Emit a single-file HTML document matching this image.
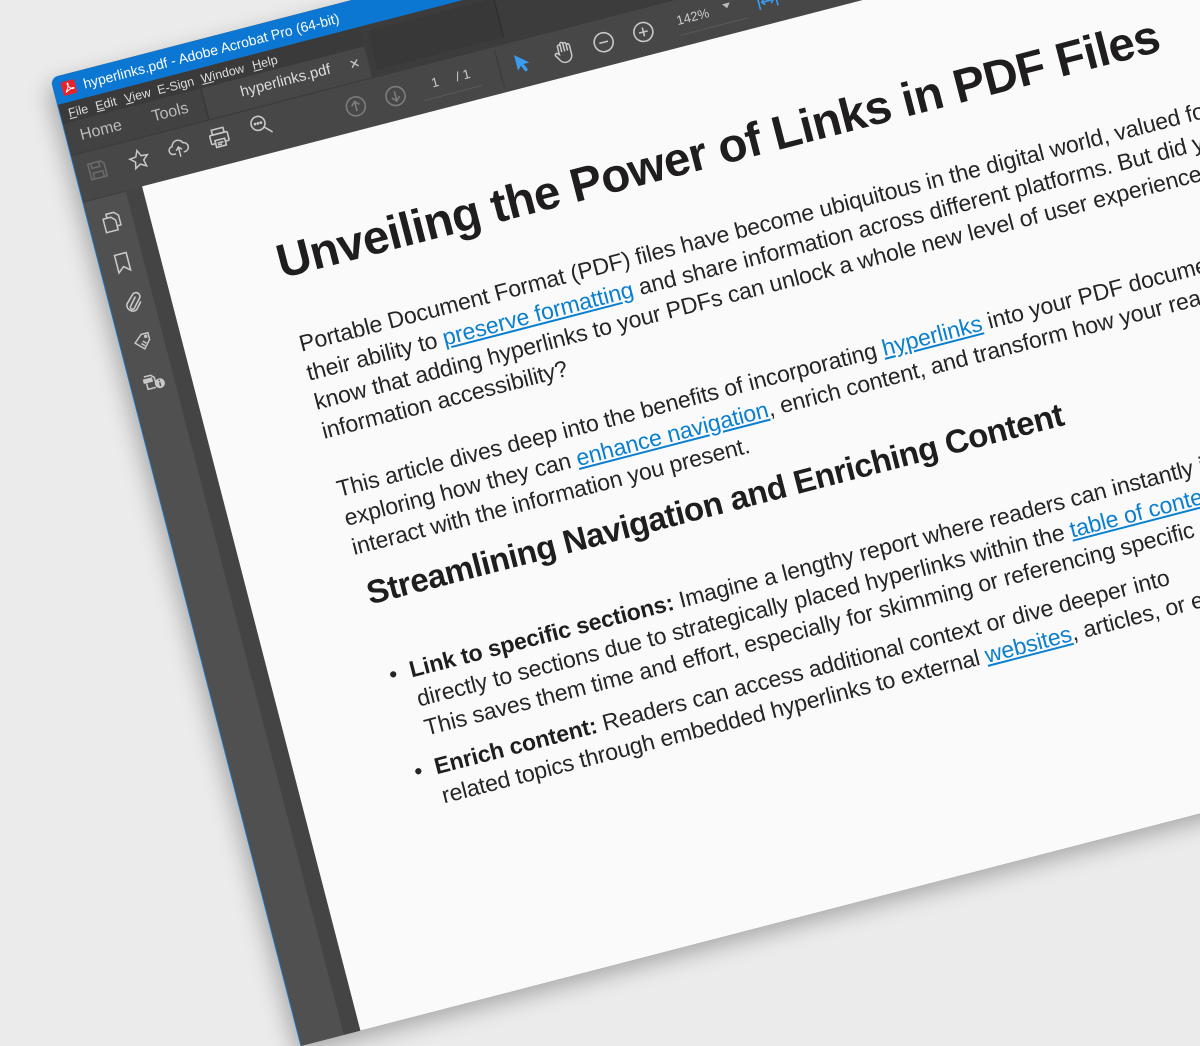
<!DOCTYPE html>
<html><head><meta charset="utf-8">
<style>
html,body{margin:0;padding:0;width:1200px;height:630px;overflow:hidden;background:#ebebeb;font-family:"Liberation Sans",sans-serif}
.win{position:absolute;left:50px;top:78px;width:1500px;height:1000px;transform-origin:0 0;transform:rotate(-14.5deg);background:#474747;border-top-left-radius:8px;border-left:1.5px solid #1a7fd6;box-shadow:-6px 8px 22px rgba(0,0,0,.28);overflow:hidden}
.abs{position:absolute}
.tb{left:0;top:0;width:1500px;height:28px;background:#0c77d2}
.ttl{left:30px;top:6px;color:#fff;font-size:14px;white-space:nowrap}
.menu{left:0;top:28px;width:1500px;height:20px;background:#3a3a3a}
.mi{top:32px;color:#ddd;font-size:12.5px;white-space:nowrap}
.hometools{left:0;top:48px;width:142px;height:32px;background:#424242;border-right:1px solid #333}
.doctab{left:143px;top:28px;width:167px;height:52px;background:#474747}
.dark{left:311px;top:28px;width:1200px;height:52px;background:#3c3c3c}
.darkbox{left:318px;top:34px;width:130px;height:40px;background:#383838;border-right:1px solid #2c2c2c}
.toolbar{left:0;top:80px;width:1500px;height:48px;background:#474747;border-top:1px solid #3a3a3a}
.side{left:0;top:128px;width:44px;height:900px;background:#505050;border-top:1px solid #3d3d3d}
.strip{left:44px;top:128px;width:17px;height:900px;background:#444}
.page{left:61px;top:128px;width:1500px;height:900px;background:#fafafa}
.pt{position:absolute;white-space:nowrap;color:#222}
.h1{font-size:47.5px;font-weight:bold;line-height:46px;letter-spacing:-0.6px;color:#1f1d1e}
.p{font-size:23px;line-height:30px;color:#252525;letter-spacing:-0.1px}
.h2{font-size:33px;font-weight:bold;line-height:34px;letter-spacing:-0.5px;color:#1f1d1e}
a{color:#0a7fd0;text-decoration:underline}
svg{position:absolute;overflow:visible}
</style></head><body>
<div class="win">
  <div class="abs tb"></div>
  <svg style="left:8px;top:7px" width="14" height="14" viewBox="0 0 14 14"><rect x="0" y="0" width="14" height="14" rx="2" fill="#e8242a"/><path d="M3 11 C6 7 7 4 7 3 C7 2 6 2 6 3 C6 6 9 9 11 9 C12 9 12 8 11 8 C8 8 5 10 3 11Z" fill="none" stroke="#fff" stroke-width="1"/></svg>
  <div class="abs ttl">hyperlinks.pdf - Adobe Acrobat Pro (64-bit)</div>
  <div class="abs menu"></div>
  <div class="abs dark"></div>
  <div class="abs darkbox"></div>
  <div class="abs mi" style="left:8px"><u>F</u>ile</div>
  <div class="abs mi" style="left:36px"><u>E</u>dit</div>
  <div class="abs mi" style="left:66px"><u>V</u>iew</div>
  <div class="abs mi" style="left:100px">E-Sign</div>
  <div class="abs mi" style="left:145px"><u>W</u>indow</div>
  <div class="abs mi" style="left:198px"><u>H</u>elp</div>
  <div class="abs hometools"></div>
  <div class="abs" style="left:14px;top:55px;color:#bbb;font-size:16px">Home</div>
  <div class="abs" style="left:88px;top:55px;color:#bbb;font-size:16px">Tools</div>
  <div class="abs doctab" style="top:48px;height:32px"></div>
  <div class="abs" style="left:180px;top:53px;color:#ddd;font-size:15px">hyperlinks.pdf</div>
  <div class="abs" style="left:292px;top:55px;color:#ccc;font-size:13px">✕</div>
  <div class="abs toolbar"></div>
  <svg style="left:12px;top:91px" width="20" height="20" viewBox="0 0 20 20" fill="none" stroke="#6a6a6a" stroke-width="1.6"><path d="M2 2h13l3 3v13H2z"/><path d="M5 2v5h8V2M5 18v-6h10v6"/></svg>
  <svg style="left:54px;top:90px" width="22" height="22" viewBox="0 0 22 22" fill="none" stroke="#c8c8c8" stroke-width="1.5"><path d="M11 2l2.7 6 6.3.6-4.8 4.2 1.4 6.4L11 16l-5.6 3.2 1.4-6.4L2 8.6 8.3 8z"/></svg>
  <svg style="left:95px;top:89px" width="22" height="22" viewBox="0 0 22 22" fill="none" stroke="#c8c8c8" stroke-width="1.5"><path d="M7 16H5a4 4 0 0 1 0-8 6 6 0 0 1 11.5-1A4.5 4.5 0 0 1 16 16h-1"/><path d="M11 20V10M8 13l3-3 3 3"/></svg>
  <svg style="left:137px;top:89px" width="22" height="22" viewBox="0 0 22 22" fill="none" stroke="#c8c8c8" stroke-width="1.6"><rect x="5" y="2" width="12" height="5"/><rect x="2" y="7" width="18" height="9" rx="1"/><rect x="6" y="13" width="10" height="7" fill="#474747"/><path d="M8 16h6M8 18h4"/></svg>
  <svg style="left:180px;top:87px" width="24" height="24" viewBox="0 0 24 24" fill="none" stroke="#c8c8c8" stroke-width="1.6"><circle cx="9" cy="9" r="7"/><path d="M14 14l7 7"/><circle cx="6" cy="9" r=".6" fill="#c8c8c8"/><circle cx="9" cy="9" r=".6" fill="#c8c8c8"/><circle cx="12" cy="9" r=".6" fill="#c8c8c8"/></svg>
  <svg style="left:277px;top:93px" width="22" height="22" viewBox="0 0 22 22" fill="none" stroke="#7d7d7d" stroke-width="1.6"><circle cx="11" cy="11" r="9.5"/><path d="M11 16V6M7 10l4-4 4 4"/></svg>
  <svg style="left:318px;top:93px" width="22" height="22" viewBox="0 0 22 22" fill="none" stroke="#7d7d7d" stroke-width="1.6"><circle cx="11" cy="11" r="9.5"/><path d="M11 6v10M7 12l4 4 4-4"/></svg>
  <div class="abs" style="left:355px;top:93px;width:60px;height:22px;border-bottom:1px solid #5a5a5a;color:#ccc;font-size:13px"><span style="margin-left:12px">1</span><span style="margin-left:18px">/ 1</span></div>
  <div class="abs" style="left:436px;top:84px;width:1px;height:40px;background:#3a3a3a"></div>
  <svg style="left:452px;top:93px" width="18" height="22" viewBox="0 0 18 22"><path d="M2 1v16l4-4 3 7 3-1.5-3-6.5h6z" fill="#3a9df0"/></svg>
  <svg style="left:493px;top:92px" width="22" height="24" viewBox="0 0 22 24" fill="none" stroke="#c8c8c8" stroke-width="1.5"><path d="M5 13V5a1.5 1.5 0 0 1 3 0v6V3a1.5 1.5 0 0 1 3 0v8V4a1.5 1.5 0 0 1 3 0v7V6a1.5 1.5 0 0 1 3 0v9c0 4-3 7-7 7-3 0-5-2-6-4l-3-5a1.5 1.5 0 0 1 2.5-1.5z"/></svg>
  <svg style="left:533px;top:93px" width="22" height="22" viewBox="0 0 22 22" fill="none" stroke="#c8c8c8" stroke-width="1.6"><circle cx="11" cy="11" r="9.5"/><path d="M6.5 11h9"/></svg>
  <svg style="left:574px;top:93px" width="22" height="22" viewBox="0 0 22 22" fill="none" stroke="#c8c8c8" stroke-width="1.6"><circle cx="11" cy="11" r="9.5"/><path d="M6.5 11h9M11 6.5v9"/></svg>
  <div class="abs" style="left:620px;top:94px;width:70px;height:22px;border-bottom:1px solid #5a5a5a;color:#ccc;font-size:13px">142%</div>
  <div class="abs" style="left:668px;top:97px;width:0;height:0;border-left:4px solid transparent;border-right:4px solid transparent;border-top:5px solid #bbb"></div>
  <svg style="left:702px;top:96px" width="22" height="18" viewBox="0 0 22 18" fill="none" stroke="#3a9df0" stroke-width="1.6"><path d="M2 2v14M20 2v14M5 9h12M8 6l-3 3 3 3M14 6l3 3-3 3"/></svg>
  <div class="abs side"></div>
  <div class="abs strip"></div>
  <svg style="left:12px;top:144px" width="22" height="22" viewBox="0 0 22 22" fill="none" stroke="#c8c8c8" stroke-width="1.5"><path d="M7 6V2h8l4 4v10h-4"/><path d="M3 6h8l4 4v10H3z"/></svg>
  <svg style="left:14px;top:186px" width="18" height="22" viewBox="0 0 18 22" fill="none" stroke="#c8c8c8" stroke-width="1.6"><path d="M3 2h12v18l-6-5-6 5z"/></svg>
  <svg style="left:13px;top:226px" width="20" height="24" viewBox="0 0 20 24" fill="none" stroke="#c8c8c8" stroke-width="1.6"><path d="M14 7l-7 8a2 2 0 0 0 3 3l8-9a4 4 0 0 0-6-5L4 12a6 6 0 0 0 8 8l6-7"/></svg>
  <svg style="left:12px;top:268px" width="24" height="22" viewBox="0 0 24 22" fill="none" stroke="#c8c8c8" stroke-width="1.5"><path d="M3 10l8-7h7v7l-7 8z"/><circle cx="15" cy="6" r="1"/><path d="M9 12l3 3M11 10l3 3"/></svg>
  <svg style="left:12px;top:308px" width="24" height="22" viewBox="0 0 24 22" fill="none" stroke="#c8c8c8" stroke-width="1.5"><path d="M3 5h7l3 3v5M4 12v6h8"/><rect x="2" y="8" width="8" height="3" fill="#c8c8c8"/><circle cx="17" cy="15" r="5" fill="#c8c8c8" stroke="none"/><path d="M17 14v4" stroke="#505050"/><circle cx="17" cy="12" r=".8" fill="#505050" stroke="none"/></svg>
  <div class="abs page">
    <div class="pt h1" style="left:112px;top:86px">Unveiling the Power of Links in PDF Files</div>
    <div class="pt p" style="left:113px;top:177px">Portable Document Format (PDF) files have become ubiquitous in the digital world, valued for</div>
    <div class="pt p" style="left:113px;top:207px">their ability to <a>preserve formatting</a> and share information across different platforms. But did you</div>
    <div class="pt p" style="left:113px;top:237px">know that adding hyperlinks to your PDFs can unlock a whole new level of user experience and</div>
    <div class="pt p" style="left:113px;top:267px">information accessibility?</div>
    <div class="pt p" style="left:113px;top:327px">This article dives deep into the benefits of incorporating <a>hyperlinks</a> into your PDF documents,</div>
    <div class="pt p" style="left:113px;top:357px">exploring how they can <a>enhance navigation</a>, enrich content, and transform how your readers</div>
    <div class="pt p" style="left:113px;top:387px">interact with the information you present.</div>
    <div class="pt h2" style="left:116px;top:434px">Streamlining Navigation and Enriching Content</div>
    <div class="pt p" style="left:117px;top:520px">•</div>
    <div class="pt p" style="left:138px;top:520px"><b style="color:#1f1d1e">Link to specific sections:</b> Imagine a lengthy report where readers can instantly jump</div>
    <div class="pt p" style="left:138px;top:550px">directly to sections due to strategically placed hyperlinks within the <a>table of contents</a>.</div>
    <div class="pt p" style="left:138px;top:580px">This saves them time and effort, especially for skimming or referencing specific</div>
    <div class="pt p" style="left:117px;top:620px">•</div>
    <div class="pt p" style="left:138px;top:620px"><b style="color:#1f1d1e">Enrich content:</b> Readers can access additional context or dive deeper into</div>
    <div class="pt p" style="left:138px;top:650px">related topics through embedded hyperlinks to external <a>websites</a>, articles, or expert resources.</div>
  </div>
</div>
</body></html>
